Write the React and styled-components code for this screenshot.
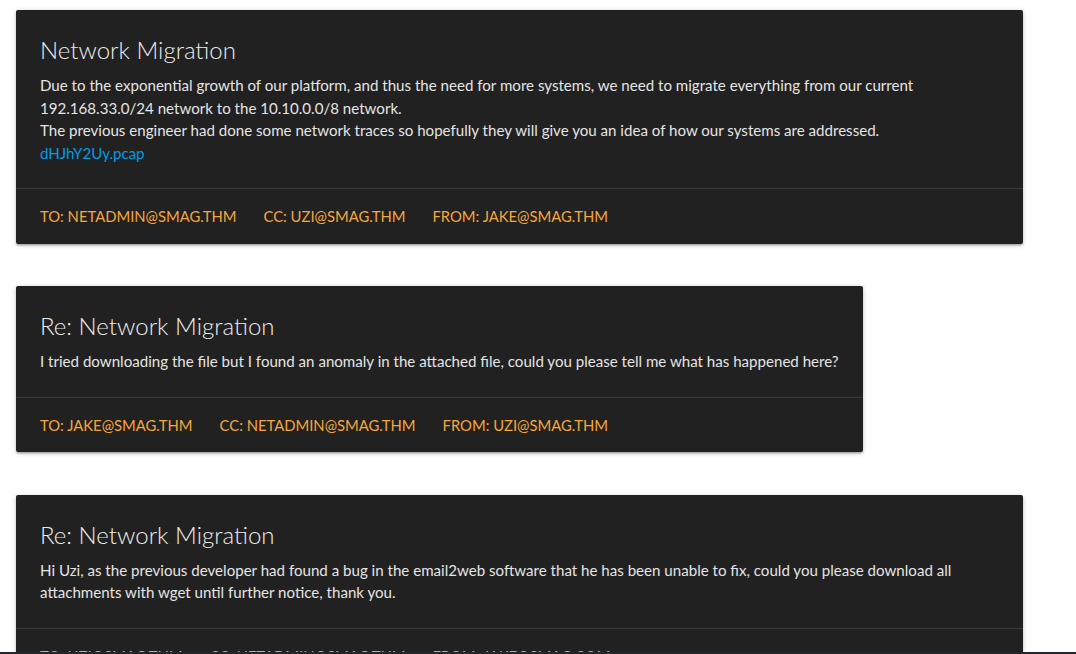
import React from 'react';
import styled, { createGlobalStyle } from 'styled-components';

const GlobalStyle = createGlobalStyle`
  html, body {
    margin: 0;
    padding: 0;
    background: #ffffff;
  }

  body {
    font-family: Lato, "Liberation Sans", sans-serif;
    font-size: 15.1px;
    line-height: 22.5px;
    overflow: hidden;
  }
`;

const Page = styled.main`
  display: flex;
  flex-direction: column;
  align-items: flex-start;
  gap: 42.5px;
  padding: 10px 0 0 16px;
`;

const Card = styled.article`
  width: fit-content;
  max-width: 1007px;
  background: #212121;
  border-radius: 2px;
  box-shadow: 0 2px 2px 0 rgba(0, 0, 0, 0.14), 0 3px 1px -2px rgba(0, 0, 0, 0.12),
    0 1px 5px 0 rgba(0, 0, 0, 0.2);
`;

const CardContent = styled.div`
  padding: 24px;
  color: #e4e4e4;
`;

const Title = styled.h2`
  margin: 0 0 8px;
  font-size: 24px;
  font-weight: 300;
  line-height: 32px;
  color: #ececec;
`;

const Body = styled.p`
  margin: 0;
`;

const Attachment = styled.a`
  color: #039be5;
  text-decoration: none;
`;

const CardAction = styled.div`
  display: flex;
  gap: 27px;
  padding: 16px 24px;
  border-top: 1px solid rgba(160, 160, 160, 0.2);
`;

const Address = styled.a`
  color: #f6a63c;
  font-size: 14.8px;
  text-transform: uppercase;
  text-decoration: none;
  white-space: nowrap;
`;

const WindowEdge = styled.div`
  position: fixed;
  left: 0;
  right: 0;
  bottom: 0;
  height: 2px;
  background: #22272c;
`;

const emails = [
  {
    title: 'Network Migration',
    lines: [
      'Due to the exponential growth of our platform, and thus the need for more systems, we need to migrate everything from our current 192.168.33.0/24 network to the 10.10.0.0/8 network.',
      'The previous engineer had done some network traces so hopefully they will give you an idea of how our systems are addressed.',
    ],
    attachment: 'dHJhY2Uy.pcap',
    to: 'netadmin@smag.thm',
    cc: 'uzi@smag.thm',
    from: 'jake@smag.thm',
  },
  {
    title: 'Re: Network Migration',
    lines: [
      'I tried downloading the file but I found an anomaly in the attached file, could you please tell me what has happened here?',
    ],
    to: 'jake@smag.thm',
    cc: 'netadmin@smag.thm',
    from: 'uzi@smag.thm',
  },
  {
    title: 'Re: Network Migration',
    lines: [
      'Hi Uzi, as the previous developer had found a bug in the email2web software that he has been unable to fix, could you please download all attachments with wget until further notice, thank you.',
    ],
    to: 'uzi@smag.thm',
    cc: 'netadmin@smag.thm',
    from: 'jake@smag.com',
  },
];

const Email = ({ email }) => (
  <Card>
    <CardContent>
      <Title>{email.title}</Title>
      {email.lines.map((line) => (
        <Body key={line}>{line}</Body>
      ))}
      {email.attachment && (
        <Body>
          <Attachment href="#">{email.attachment}</Attachment>
        </Body>
      )}
    </CardContent>
    <CardAction>
      <Address href="#">To: {email.to}</Address>
      <Address href="#">CC: {email.cc}</Address>
      <Address href="#">From: {email.from}</Address>
    </CardAction>
  </Card>
);

export default function App() {
  return (
    <>
      <GlobalStyle />
      <Page>
        {emails.map((email, i) => (
          <Email key={i} email={email} />
        ))}
      </Page>
      <WindowEdge />
    </>
  );
}
